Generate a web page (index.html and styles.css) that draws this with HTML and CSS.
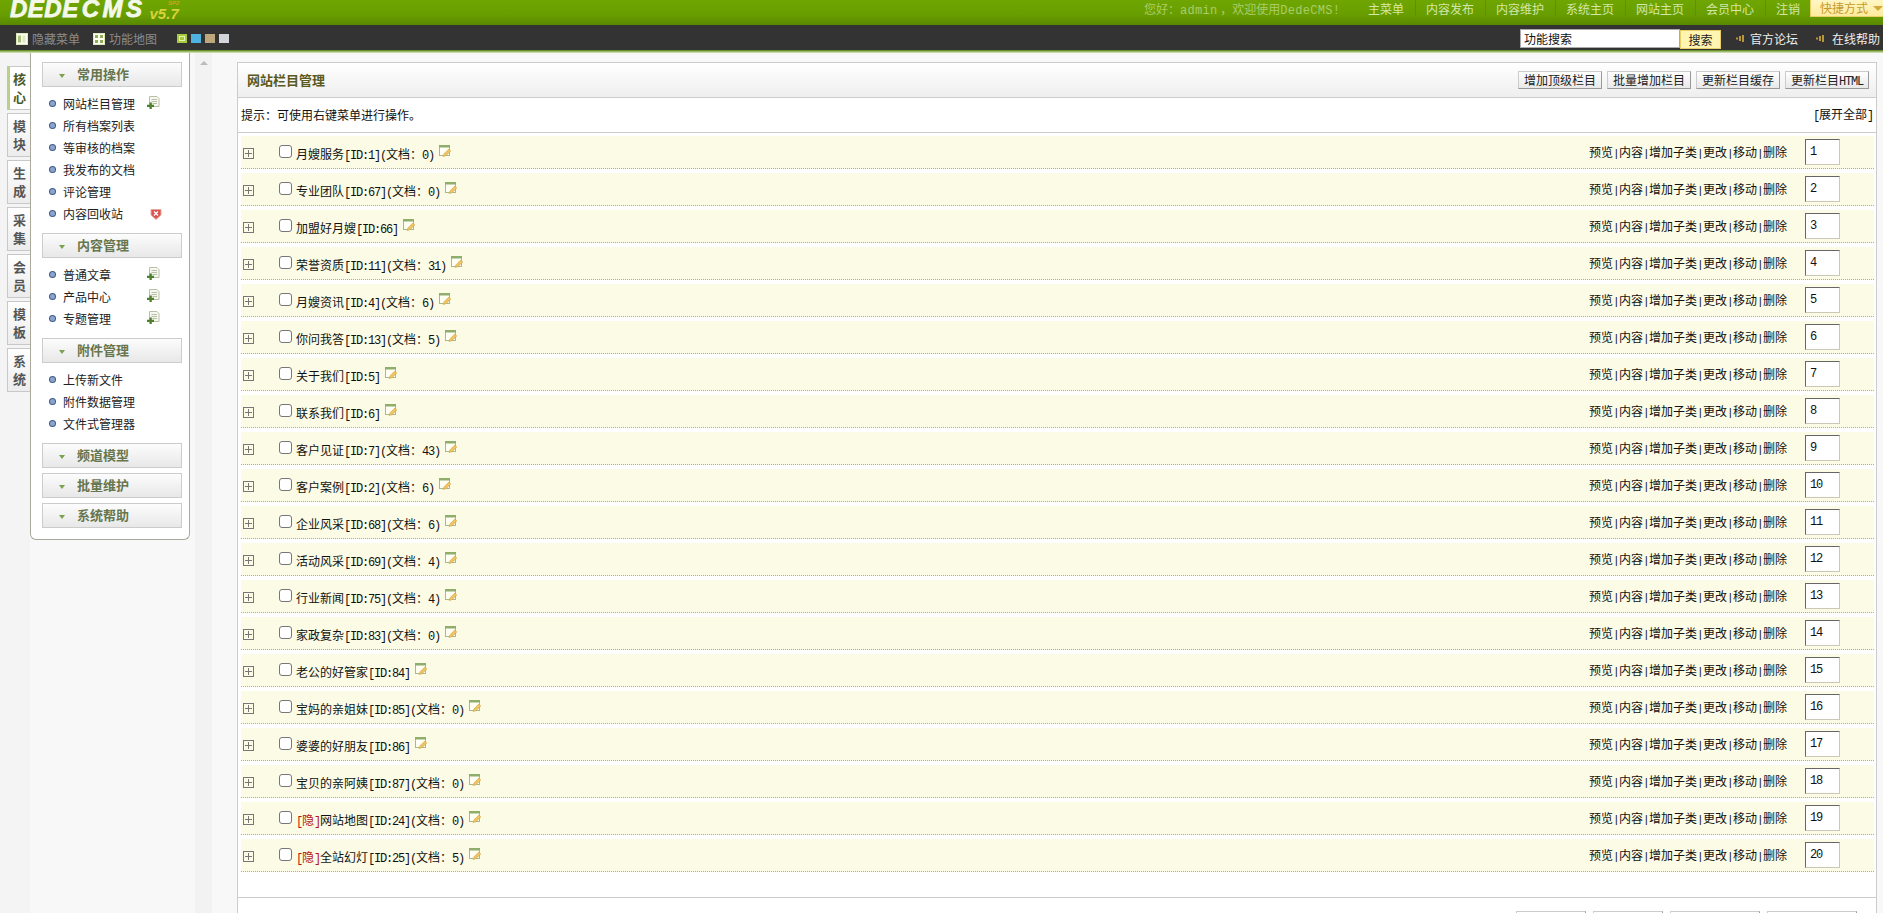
FILE: index.html
```html
<!DOCTYPE html>
<html lang="zh-CN">
<head>
  <meta charset="UTF-8" />
  <title>DedeCMS 网站栏目管理</title>
  <link rel="stylesheet" href="styles.css">
</head>
<body>

  <!-- shared icons -->
  <svg class="defs" width="0" height="0">
    <symbol id="i-edit" viewBox="0 0 12 13">
      <rect x="0.5" y="0.5" width="10" height="10" fill="#fffff4" stroke="#a9b98c"/>
      <rect x="0" y="0" width="11" height="2.5" fill="#8fae6c"/>
      <path d="M4 11.5 L5 8.8 L9.8 4 L11.8 6 L7 10.8 Z" fill="#eec465" stroke="#cf9a35" stroke-width="0.5"/>
    </symbol>
    <symbol id="i-add" viewBox="0 0 13 13">
      <path d="M2.5 .5 H10 L12 2.5 V10.5 H2.5 Z" fill="#f6f8f0" stroke="#b8c0a8"/>
      <path d="M4.5 3.5 H10 M4.5 5.5 H10 M5.5 7.5 H10" stroke="#b8c0a8"/>
      <path d="M2.5 6.5 H4.8 V8.8 H7 V11 H4.8 V13 H2.5 V11 H0 V8.8 H2.5 Z" fill="#4e7f2c"/>
    </symbol>
    <symbol id="i-expand" viewBox="0 0 11 11">
      <rect x="0.5" y="0.5" width="10" height="10" fill="none" stroke="#777"/>
      <path d="M2 5.5 H9 M5.5 2 V9" stroke="#777"/>
    </symbol>
    <symbol id="i-sound" viewBox="0 0 9 9">
      <path d="M1 3.5 V5.5 M4 2 V7 M7 1 V8" stroke="#e5b93c" stroke-width="1.5"/>
    </symbol>
  </svg>

  <header class="top-bar">
    <div class="logo">DEDE<span class="logo-cms">CMS</span><span class="logo-ver">v5.7</span><span class="logo-sp">SP2</span></div>
    <div class="welcome">您好：<code>admin</code> ，欢迎使用<code>DedeCMS!</code></div>
    <nav class="top-nav">
      <a>主菜单</a><a>内容发布</a><a>内容维护</a><a>系统主页</a><a>网站主页</a><a>会员中心</a><a>注销</a>
    </nav>
    <div class="shortcut">快捷方式<span class="shortcut-arrow"></span></div>
  </header>

  <div class="sub-bar">
    <a class="sub-link">
      <svg width="12" height="12" viewBox="0 0 12 12"><rect x=".5" y=".5" width="11" height="11" fill="#fffff0" stroke="#dde8c0"/><rect x="2" y="2.5" width="3" height="7" fill="#a8c27a"/><rect x="6.5" y="2.5" width="3" height="7" fill="#dfe8c8"/></svg>
      隐藏菜单
    </a>
    <a class="sub-link">
      <svg width="12" height="12" viewBox="0 0 12 12"><rect x=".5" y=".5" width="11" height="11" fill="#fffff0" stroke="#dde8c0"/><path d="M2 2h3v3H2zM7 2h3v3H7zM2 7h3v3H2zM7 7h3v3H7z" fill="#8fae5c"/></svg>
      功能地图
    </a>
    <div class="skins">
      <span class="skin skin-green"></span><span class="skin skin-blue"></span><span class="skin skin-tan"></span><span class="skin skin-gray"></span>
    </div>
    <div class="search">
      <input class="search-input" value="功能搜索">
      <button class="search-btn">搜索</button>
    </div>
    <a class="help-link"><svg width="9" height="9"><use href="#i-sound"/></svg>官方论坛</a>
    <a class="help-link"><svg width="9" height="9"><use href="#i-sound"/></svg>在线帮助</a>
  </div>
  <div class="bar-line"></div>

  <div class="layout">

    <div class="tabs">
      <div class="tab tab-on">核<br>心</div>
      <div class="tab">模<br>块</div>
      <div class="tab">生<br>成</div>
      <div class="tab">采<br>集</div>
      <div class="tab">会<br>员</div>
      <div class="tab">模<br>板</div>
      <div class="tab">系<br>统</div>
    </div>

    <aside class="menu">
      <h3 class="menu-head">常用操作</h3>
      <ul class="menu-list">
        <li>网站栏目管理<svg class="menu-icon" width="13" height="13"><use href="#i-add"/></svg></li>
        <li>所有档案列表</li>
        <li>等审核的档案</li>
        <li>我发布的文档</li>
        <li>评论管理</li>
        <li>内容回收站<svg class="menu-icon menu-icon-del" width="12" height="12" viewBox="0 0 12 12"><path d="M1 1.5 H11 V7 L6 11.5 L1 7 Z" fill="#d9534f" stroke="#e8a8a0"/><path d="M4 3.5 L8 7.5 M8 3.5 L4 7.5" stroke="#fff" stroke-width="1.3"/></svg></li>
      </ul>
      <h3 class="menu-head">内容管理</h3>
      <ul class="menu-list">
        <li>普通文章<svg class="menu-icon" width="13" height="13"><use href="#i-add"/></svg></li>
        <li>产品中心<svg class="menu-icon" width="13" height="13"><use href="#i-add"/></svg></li>
        <li>专题管理<svg class="menu-icon" width="13" height="13"><use href="#i-add"/></svg></li>
      </ul>
      <h3 class="menu-head">附件管理</h3>
      <ul class="menu-list">
        <li>上传新文件</li>
        <li>附件数据管理</li>
        <li>文件式管理器</li>
      </ul>
      <h3 class="menu-head">频道模型</h3>
      <h3 class="menu-head">批量维护</h3>
      <h3 class="menu-head">系统帮助</h3>
    </aside>

    <div class="strip"><span class="strip-arrow"></span></div>

    <main class="panel">
      <div class="panel-title">
        <h2>网站栏目管理</h2>
        <div class="title-btns">
          <button class="btn">增加顶级栏目</button>
          <button class="btn">批量增加栏目</button>
          <button class="btn">更新栏目缓存</button>
          <button class="btn">更新栏目<code>HTML</code></button>
        </div>
      </div>
      <div class="tip-row">
        <span>提示：可使用右键菜单进行操作。</span>
        <span><code>[</code>展开全部<code>]</code></span>
      </div>

      <ul class="rows">
        <li class="row"><svg class="expand" width="11" height="11"><use href="#i-expand"/></svg><input type="checkbox" class="check"><span class="name">月嫂服务<code>[ID:1](</code>文档：<code>0)</code></span><svg class="edit" width="12" height="13"><use href="#i-edit"/></svg><span class="ops">预览<i>|</i>内容<i>|</i>增加子类<i>|</i>更改<i>|</i>移动<i>|</i>删除</span><input class="rank" value="1"></li>
        <li class="row"><svg class="expand" width="11" height="11"><use href="#i-expand"/></svg><input type="checkbox" class="check"><span class="name">专业团队<code>[ID:67](</code>文档：<code>0)</code></span><svg class="edit" width="12" height="13"><use href="#i-edit"/></svg><span class="ops">预览<i>|</i>内容<i>|</i>增加子类<i>|</i>更改<i>|</i>移动<i>|</i>删除</span><input class="rank" value="2"></li>
        <li class="row"><svg class="expand" width="11" height="11"><use href="#i-expand"/></svg><input type="checkbox" class="check"><span class="name">加盟好月嫂<code>[ID:66]</code></span><svg class="edit" width="12" height="13"><use href="#i-edit"/></svg><span class="ops">预览<i>|</i>内容<i>|</i>增加子类<i>|</i>更改<i>|</i>移动<i>|</i>删除</span><input class="rank" value="3"></li>
        <li class="row"><svg class="expand" width="11" height="11"><use href="#i-expand"/></svg><input type="checkbox" class="check"><span class="name">荣誉资质<code>[ID:11](</code>文档：<code>31)</code></span><svg class="edit" width="12" height="13"><use href="#i-edit"/></svg><span class="ops">预览<i>|</i>内容<i>|</i>增加子类<i>|</i>更改<i>|</i>移动<i>|</i>删除</span><input class="rank" value="4"></li>
        <li class="row"><svg class="expand" width="11" height="11"><use href="#i-expand"/></svg><input type="checkbox" class="check"><span class="name">月嫂资讯<code>[ID:4](</code>文档：<code>6)</code></span><svg class="edit" width="12" height="13"><use href="#i-edit"/></svg><span class="ops">预览<i>|</i>内容<i>|</i>增加子类<i>|</i>更改<i>|</i>移动<i>|</i>删除</span><input class="rank" value="5"></li>
        <li class="row"><svg class="expand" width="11" height="11"><use href="#i-expand"/></svg><input type="checkbox" class="check"><span class="name">你问我答<code>[ID:13](</code>文档：<code>5)</code></span><svg class="edit" width="12" height="13"><use href="#i-edit"/></svg><span class="ops">预览<i>|</i>内容<i>|</i>增加子类<i>|</i>更改<i>|</i>移动<i>|</i>删除</span><input class="rank" value="6"></li>
        <li class="row"><svg class="expand" width="11" height="11"><use href="#i-expand"/></svg><input type="checkbox" class="check"><span class="name">关于我们<code>[ID:5]</code></span><svg class="edit" width="12" height="13"><use href="#i-edit"/></svg><span class="ops">预览<i>|</i>内容<i>|</i>增加子类<i>|</i>更改<i>|</i>移动<i>|</i>删除</span><input class="rank" value="7"></li>
        <li class="row"><svg class="expand" width="11" height="11"><use href="#i-expand"/></svg><input type="checkbox" class="check"><span class="name">联系我们<code>[ID:6]</code></span><svg class="edit" width="12" height="13"><use href="#i-edit"/></svg><span class="ops">预览<i>|</i>内容<i>|</i>增加子类<i>|</i>更改<i>|</i>移动<i>|</i>删除</span><input class="rank" value="8"></li>
        <li class="row"><svg class="expand" width="11" height="11"><use href="#i-expand"/></svg><input type="checkbox" class="check"><span class="name">客户见证<code>[ID:7](</code>文档：<code>43)</code></span><svg class="edit" width="12" height="13"><use href="#i-edit"/></svg><span class="ops">预览<i>|</i>内容<i>|</i>增加子类<i>|</i>更改<i>|</i>移动<i>|</i>删除</span><input class="rank" value="9"></li>
        <li class="row"><svg class="expand" width="11" height="11"><use href="#i-expand"/></svg><input type="checkbox" class="check"><span class="name">客户案例<code>[ID:2](</code>文档：<code>6)</code></span><svg class="edit" width="12" height="13"><use href="#i-edit"/></svg><span class="ops">预览<i>|</i>内容<i>|</i>增加子类<i>|</i>更改<i>|</i>移动<i>|</i>删除</span><input class="rank" value="10"></li>
        <li class="row"><svg class="expand" width="11" height="11"><use href="#i-expand"/></svg><input type="checkbox" class="check"><span class="name">企业风采<code>[ID:68](</code>文档：<code>6)</code></span><svg class="edit" width="12" height="13"><use href="#i-edit"/></svg><span class="ops">预览<i>|</i>内容<i>|</i>增加子类<i>|</i>更改<i>|</i>移动<i>|</i>删除</span><input class="rank" value="11"></li>
        <li class="row"><svg class="expand" width="11" height="11"><use href="#i-expand"/></svg><input type="checkbox" class="check"><span class="name">活动风采<code>[ID:69](</code>文档：<code>4)</code></span><svg class="edit" width="12" height="13"><use href="#i-edit"/></svg><span class="ops">预览<i>|</i>内容<i>|</i>增加子类<i>|</i>更改<i>|</i>移动<i>|</i>删除</span><input class="rank" value="12"></li>
        <li class="row"><svg class="expand" width="11" height="11"><use href="#i-expand"/></svg><input type="checkbox" class="check"><span class="name">行业新闻<code>[ID:75](</code>文档：<code>4)</code></span><svg class="edit" width="12" height="13"><use href="#i-edit"/></svg><span class="ops">预览<i>|</i>内容<i>|</i>增加子类<i>|</i>更改<i>|</i>移动<i>|</i>删除</span><input class="rank" value="13"></li>
        <li class="row"><svg class="expand" width="11" height="11"><use href="#i-expand"/></svg><input type="checkbox" class="check"><span class="name">家政复杂<code>[ID:83](</code>文档：<code>0)</code></span><svg class="edit" width="12" height="13"><use href="#i-edit"/></svg><span class="ops">预览<i>|</i>内容<i>|</i>增加子类<i>|</i>更改<i>|</i>移动<i>|</i>删除</span><input class="rank" value="14"></li>
        <li class="row"><svg class="expand" width="11" height="11"><use href="#i-expand"/></svg><input type="checkbox" class="check"><span class="name">老公的好管家<code>[ID:84]</code></span><svg class="edit" width="12" height="13"><use href="#i-edit"/></svg><span class="ops">预览<i>|</i>内容<i>|</i>增加子类<i>|</i>更改<i>|</i>移动<i>|</i>删除</span><input class="rank" value="15"></li>
        <li class="row"><svg class="expand" width="11" height="11"><use href="#i-expand"/></svg><input type="checkbox" class="check"><span class="name">宝妈的亲姐妹<code>[ID:85](</code>文档：<code>0)</code></span><svg class="edit" width="12" height="13"><use href="#i-edit"/></svg><span class="ops">预览<i>|</i>内容<i>|</i>增加子类<i>|</i>更改<i>|</i>移动<i>|</i>删除</span><input class="rank" value="16"></li>
        <li class="row"><svg class="expand" width="11" height="11"><use href="#i-expand"/></svg><input type="checkbox" class="check"><span class="name">婆婆的好朋友<code>[ID:86]</code></span><svg class="edit" width="12" height="13"><use href="#i-edit"/></svg><span class="ops">预览<i>|</i>内容<i>|</i>增加子类<i>|</i>更改<i>|</i>移动<i>|</i>删除</span><input class="rank" value="17"></li>
        <li class="row"><svg class="expand" width="11" height="11"><use href="#i-expand"/></svg><input type="checkbox" class="check"><span class="name">宝贝的亲阿姨<code>[ID:87](</code>文档：<code>0)</code></span><svg class="edit" width="12" height="13"><use href="#i-edit"/></svg><span class="ops">预览<i>|</i>内容<i>|</i>增加子类<i>|</i>更改<i>|</i>移动<i>|</i>删除</span><input class="rank" value="18"></li>
        <li class="row"><svg class="expand" width="11" height="11"><use href="#i-expand"/></svg><input type="checkbox" class="check"><span class="name"><em><code>[</code>隐<code>]</code></em>网站地图<code>[ID:24](</code>文档：<code>0)</code></span><svg class="edit" width="12" height="13"><use href="#i-edit"/></svg><span class="ops">预览<i>|</i>内容<i>|</i>增加子类<i>|</i>更改<i>|</i>移动<i>|</i>删除</span><input class="rank" value="19"></li>
        <li class="row"><svg class="expand" width="11" height="11"><use href="#i-expand"/></svg><input type="checkbox" class="check"><span class="name"><em><code>[</code>隐<code>]</code></em>全站幻灯<code>[ID:25](</code>文档：<code>5)</code></span><svg class="edit" width="12" height="13"><use href="#i-edit"/></svg><span class="ops">预览<i>|</i>内容<i>|</i>增加子类<i>|</i>更改<i>|</i>移动<i>|</i>删除</span><input class="rank" value="20"></li>
      </ul>

      <div class="panel-foot">
        <button class="btn foot-btn foot-a"></button>
        <button class="btn foot-btn foot-a"></button>
        <button class="btn foot-btn foot-b"></button>
        <button class="btn foot-btn foot-b"></button>
      </div>
    </main>

  </div>

</body>
</html>
```

FILE: styles.css
```css
* { box-sizing: border-box; }
html, body { height: 100%; }
body {
  margin: 0;
  height: 913px;
  overflow: hidden;
  font-family: "Noto Sans CJK SC", "Liberation Sans", sans-serif;
  font-size: 12px;
  line-height: 16px;
  color: #111;
  background-color: #f8f8f8;
}
ul { list-style: none; margin: 0; padding: 0; }
h2, h3 { margin: 0; }
code {
  font-family: "Liberation Mono", monospace;
  font-size: 12px;
  letter-spacing: -1.2px;
}
.defs { position: absolute; }

/* top green bar */
.top-bar {
  display: flex;
  height: 25px;
  overflow: hidden;
  background: linear-gradient(#6fa602, #689d00 60%, #578800);
}
.logo {
  position: relative;
  width: 1144px;
  padding-left: 10px;
  font-family: "Liberation Sans", sans-serif;
  font-size: 24px;
  line-height: 17px;
  font-weight: bold;
  font-style: italic;
  letter-spacing: 0.5px;
  color: #f4f8ea;
  -webkit-text-stroke: 0.8px #f4f8ea;
  flex: none;
}
.logo-cms { margin-left: 3px; letter-spacing: 3.5px; }
.logo-ver {
  position: relative;
  top: 2px;
  margin-left: 4px;
  font-size: 15px;
  letter-spacing: 0;
  color: #d8d23a;
  -webkit-text-stroke: 0;
}
.logo-sp {
  position: absolute;
  left: 168px;
  top: 0;
  font-size: 6px;
  line-height: 6px;
  letter-spacing: 0;
  color: #d7a016;
  -webkit-text-stroke: 0;
}
.welcome {
  width: 224px;
  flex: none;
  line-height: 17px;
  color: #a9cd6a;
  white-space: nowrap;
}
.welcome code { letter-spacing: 0.3px; }
.top-nav { display: flex; height: 17px; line-height: 17px; color: #d4e6a8; }
.top-nav a {
  padding-right: 11px;
  margin-right: 10px;
  border-right: 1px solid #5f9200;
  white-space: nowrap;
}
.top-nav a:last-child { border-right: 0; padding-right: 0; margin-right: 10px; }
.shortcut {
  position: relative;
  width: 73px;
  height: 17px;
  flex: none;
  line-height: 16px;
  padding-left: 9px;
  color: #c69a2b;
  background: linear-gradient(#fff6c4, #fdeb9c);
  border-left: 1px solid #e8cf68;
  border-bottom: 1px solid #e8cf68;
}
.shortcut-arrow {
  position: absolute;
  right: 0;
  top: 6px;
  border: 5px solid transparent;
  border-top-color: #d3a93d;
  border-bottom: 0;
}

/* dark bar */
.sub-bar {
  display: flex;
  align-items: center;
  height: 25px;
  padding: 2px 0 0 16px;
  background: #333;
  color: #8b8b8b;
}
.sub-link {
  display: flex;
  align-items: center;
  gap: 4px;
  margin-right: 13px;
  white-space: nowrap;
}
.skins { display: flex; gap: 4px; margin-left: 7px; margin-right: 1291px; }
.skin { width: 10px; height: 9px; }
.skin-green { background: #a6cc3c; box-shadow: inset 0 0 0 2px #a6cc3c, inset 0 0 0 3px #e6f0c0; }
.skin-blue { background: #4fb3e0; }
.skin-tan { background: #bda77c; }
.skin-gray { background: #d2d6da; }
.search { display: flex; align-items: center; }
.search-input {
  width: 160px;
  height: 19px;
  padding: 0 3px;
  border: 1px solid #aaa;
  background: #fff;
  font: 12px "Noto Sans CJK SC", sans-serif;
  color: #111;
}
.search-btn {
  width: 41px;
  height: 19px;
  margin-top: 1px;
  padding: 0;
  border: 1px solid #e8cf68;
  background: #fff4b0;
  font: 12px "Noto Sans CJK SC", sans-serif;
  color: #222;
}
.help-link {
  display: flex;
  align-items: center;
  gap: 5px;
  margin-left: 15px;
  color: #eee;
  white-space: nowrap;
}
.help-link + .help-link { margin-left: 18px; gap: 7px; }
.bar-line {
  height: 3px;
  background: linear-gradient(#4f7a10, #a9c67a 60%, #dfe8c8);
}

/* main layout */
.layout { display: flex; align-items: flex-start; }
.tabs {
  width: 30px;
  padding: 13px 0 0 7px;
  flex: none;
  background: #f4f4f4;
  align-self: stretch;
}
.tab {
  width: 23px;
  height: 44px;
  margin-bottom: 3px;
  padding: 3px 0 0 5px;
  font-size: 13px;
  line-height: 18px;
  font-weight: bold;
  color: #555;
  background: linear-gradient(#fff, #ececec);
  border: 1px solid #c8c8c8;
  border-right: 0;
}
.tab-on {
  background: #fff;
  color: #4a5a2a;
  border-left: 3px solid #b8d08a;
  padding-left: 3px;
}

/* left menu */
.menu {
  width: 160px;
  height: 487px;
  flex: none;
  padding: 9px 7px 0 11px;
  background: #fff;
  border: 1px solid #aaa99c;
  border-top: 0;
  border-radius: 0 0 6px 6px;
}
.menu-head {
  position: relative;
  height: 25px;
  margin-bottom: 5px;
  padding-left: 34px;
  font-size: 13px;
  line-height: 22px;
  font-weight: bold;
  color: #66764f;
  background: linear-gradient(#fcfcfc, #e8e8e8);
  border: 1px solid #ccc;
}
.menu-head::before {
  content: "";
  position: absolute;
  left: 16px;
  top: 11px;
  border: 3px solid transparent;
  border-top: 4px solid #7aa050;
  border-bottom: 0;
}
.menu-list { margin: 6px 0 8px; }
.menu-list li {
  position: relative;
  display: flex;
  align-items: center;
  height: 22px;
  padding-left: 21px;
  color: #222;
}
.menu-list li::before {
  content: "";
  position: absolute;
  left: 8px;
  top: 8px;
  width: 5px;
  height: 5px;
  border-radius: 50%;
  background: #8ba4cf;
  box-shadow: 0 0 0 1px #3f5a86;
}
.menu-icon { margin: 0 22px 4px auto; }
.menu-icon-del { margin: 0 20px 0 auto; }

.strip {
  width: 17px;
  height: 860px;
  margin-left: 5px;
  padding: 8px 0 0 5px;
  flex: none;
  background: #f2f2f2;
}
.strip-arrow {
  display: block;
  width: 0;
  border: 4px solid transparent;
  border-bottom: 4px solid #bbb;
  border-top: 0;
}

/* content panel */
.panel {
  width: 1640px;
  height: 860px;
  margin: 9px 0 0 25px;
  flex: none;
  background: #fff;
  border: 1px solid #ccc;
  border-bottom: 0;
}
.panel-title {
  display: flex;
  justify-content: space-between;
  align-items: center;
  height: 35px;
  padding: 0 7px 0 9px;
  background: linear-gradient(#fff, #eeeeee);
  border-bottom: 1px solid #ccc;
}
.panel-title h2 {
  font-size: 13px;
  font-weight: bold;
  color: #5a5a1e;
}
.title-btns { display: flex; gap: 5px; }
.btn {
  width: 84px;
  height: 18px;
  padding: 0;
  font: 12px/16px "Noto Sans CJK SC", sans-serif;
  color: #222;
  background: linear-gradient(#fff, #e8e8e8);
  border: 1px solid #ccc;
  border-right-color: #999;
  border-bottom-color: #999;
}
.tip-row {
  display: flex;
  justify-content: space-between;
  align-items: center;
  height: 35px;
  padding: 0 3px;
  border-bottom: 1px solid #ccc;
}
.rows { padding: 3px 2px 0 3px; }
.row {
  display: flex;
  align-items: flex-start;
  height: 33px;
  margin-bottom: 4px;
  padding-left: 2px;
  background: #fcfce6;
  border-bottom: 1px dotted #aaa;
}
.expand { margin-top: 12px; flex: none; }
.check {
  appearance: none;
  width: 13px;
  height: 13px;
  margin: 9px 4px 0 25px;
  flex: none;
  background: #fff;
  border: 1px solid #777;
  border-radius: 3px;
}
.name { margin-top: 10px; white-space: nowrap; }
.name em { font-style: normal; color: #b5160e; }
.edit { margin: 9px 0 0 5px; flex: none; }
.ops { margin: 8px 18px 0 auto; white-space: nowrap; }
.ops i {
  display: inline-block;
  width: 6px;
  font-style: normal;
  font-family: "Liberation Mono", monospace;
  font-size: 11px;
  text-align: center;
}
.rank {
  width: 35px;
  height: 26px;
  margin: 3px 34px 0 0;
  padding: 0 0 0 4px;
  font: 12px "Liberation Mono", monospace;
  letter-spacing: -1.2px;
  color: #111;
  background: #fff;
  border: 1px solid #ccc8b8;
  border-top-color: #666;
  border-left-color: #666;
  flex: none;
}
.panel-foot {
  display: flex;
  justify-content: flex-end;
  gap: 7px;
  margin-top: 25px;
  padding: 13px 19px 0 0;
  border-top: 1px solid #ccc;
}
.foot-btn { height: 20px; }
.foot-a { width: 70px; }
.foot-b { width: 90px; }
```
